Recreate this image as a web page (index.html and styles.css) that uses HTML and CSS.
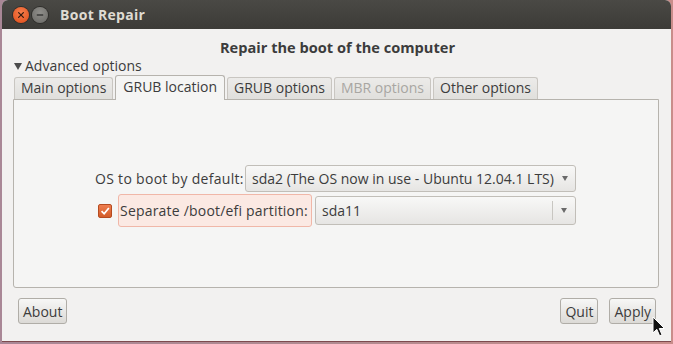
FILE: index.html
```html
<!DOCTYPE html>
<html>
<head>
<meta charset="utf-8">
<link rel="stylesheet" href="styles.css">
</head>
<body>
<div class="desk">
  <div class="window">
    <div class="titlebar">
      <span class="wbtn close"><svg width="14" height="14" viewBox="0 0 14 14"><path d="M4.6 4.6L9.4 9.4M9.4 4.6L4.6 9.4" stroke="#3a1d10" stroke-width="1.3" stroke-linecap="round"/></svg></span>
      <span class="wbtn mini"><svg width="14" height="14" viewBox="0 0 14 14"><path d="M3.8 7H10.2" stroke="#3a3a38" stroke-width="1.6"/></svg></span>
      <span class="wtitle">Boot Repair</span>
    </div>
    <div class="content">
      <div class="heading">Repair the boot of the computer</div>
      <div class="expander"><span class="arrow"></span>Advanced options</div>
      <div class="tabs">
        <div class="tab">Main options</div>
        <div class="tab active">GRUB location</div>
        <div class="tab">GRUB options</div>
        <div class="tab disabled">MBR options</div>
        <div class="tab">Other options</div>
      </div>
      <div class="panel">
        <div class="row row1">
          <span class="label">OS to boot by default:</span>
          <div class="combo combo1"><span class="ctext">sda2 (The OS now in use - Ubuntu 12.04.1 LTS)</span><span class="csep"></span><span class="carrow"></span></div>
        </div>
        <div class="row row2">
          <span class="check"><svg width="14" height="14" viewBox="0 0 14 14"><path d="M3 7.2L6 10.2L11.5 3.5" fill="none" stroke="#fff" stroke-width="2"/></svg></span>
          <span class="hlabel">Separate /boot/efi partition:</span>
          <div class="combo combo2"><span class="ctext">sda11</span><span class="csep"></span><span class="carrow"></span></div>
        </div>
      </div>
      <div class="buttons">
        <button class="btn">About</button>
        <div class="spacer"></div>
        <button class="btn">Quit</button>
        <button class="btn">Apply</button>
      </div>
    </div>
  </div>
  <svg class="cursor" width="14" height="22" viewBox="0 0 14 22"><path d="M1 1V17L4.8 13.3L7.6 19.8L10 18.8L7.3 12.5H12.5Z" fill="#111" stroke="#fff" stroke-width="1"/></svg>
</div>
</body>
</html>
```
FILE: styles.css
```css
html, body {
  margin: 0;
  padding: 0;
}
body {
  width: 673px;
  height: 344px;
  overflow: hidden;
  font-family: "Open Sans", "DejaVu Sans", sans-serif;
  font-size: 14px;
  color: #3c3c3c;
}
.desk {
  position: relative;
  width: 673px;
  height: 344px;
  background: linear-gradient(90deg, #a98796 0%, #b08a90 50%, #c98d8a 100%);
  display: flex;
  padding: 0 2px 0 2px;
  box-sizing: border-box;
}
.window {
  width: 669px;
  height: 341px;
  border-radius: 6px 6px 0 0;
  overflow: hidden;
  display: flex;
  flex-direction: column;
  background: #f2f1f0;
  box-shadow: 0 1px 0 #7e4a4e;
}
.titlebar {
  height: 29px;
  flex: none;
  background: linear-gradient(#4a4945, #3c3b37);
  display: flex;
  align-items: center;
  padding-left: 11px;
  gap: 3px;
}
.wbtn {
  width: 16px;
  height: 16px;
  border-radius: 50%;
  display: flex;
  align-items: center;
  justify-content: center;
}
.close {
  background: radial-gradient(circle at 50% 35%, #f77f4d, #df4b17);
  box-shadow: 0 0 0 1px #2f2e2b;
}
.mini {
  background: radial-gradient(circle at 50% 35%, #8f8e8a, #6a6965);
  box-shadow: 0 0 0 1px #2f2e2b;
}
.wtitle {
  margin-left: 9px;
  color: #dfdbd2;
  font-weight: bold;
  font-size: 14px;
  letter-spacing: 0.3px;
}
.content {
  flex: 1;
  display: flex;
  flex-direction: column;
  padding: 0 11px 0 11px;
}
.heading {
  text-align: center;
  font-weight: bold;
  font-size: 14.6px;
  margin-top: 9px;
  height: 19px;
  line-height: 19px;
  padding-left: 2px;
}
.expander {
  display: flex;
  align-items: center;
  height: 18px;
  line-height: 18px;
  font-size: 14px;
}
.arrow {
  width: 0;
  height: 0;
  border-left: 4px solid transparent;
  border-right: 4px solid transparent;
  border-top: 7px solid #4c4c4c;
  margin-right: 3px;
  margin-left: 1px;
}
.tabs {
  display: flex;
  align-items: flex-end;
  height: 24px;
  padding-left: 1px;
  gap: 2px;
  position: relative;
  z-index: 1;
}
.tab {
  height: 21px;
  line-height: 20px;
  padding: 0 6px;
  border: 1px solid #c9c6c1;
  border-bottom: none;
  border-radius: 3px 3px 0 0;
  background: linear-gradient(#ecebe9, #e0dfdc);
  font-size: 14px;
  color: #3c3c3c;
}
.tab.active {
  height: 24px;
  line-height: 22px;
  background: #f5f5f4;
  border-color: #b6b3ad;
  margin-bottom: -1px;
  padding: 0 7px;
}
.tab.disabled {
  color: #a8a6a2;
}
.panel {
  height: 189px;
  border: 1px solid #b6b3ad;
  border-radius: 0 0 3px 3px;
  background: #f5f5f4;
  display: flex;
  flex-direction: column;
  padding-top: 64px;
  box-sizing: border-box;
  margin-right: 1px;
}
.row {
  display: flex;
  align-items: center;
}
.row1 {
  padding-left: 81px;
  height: 28px;
}
.label {
  flex: none;
  font-size: 14px;
  width: 147px;
  text-align: right;
  white-space: nowrap;
  letter-spacing: 0.3px;
  margin-right: 3px;
}
.combo {
  flex: none;
  height: 27px;
  box-sizing: border-box;
  border: 1px solid #c1beb8;
  border-radius: 3px;
  background: linear-gradient(#f8f8f7, #e6e5e3);
  display: flex;
  align-items: center;
  font-size: 14px;
}
.combo1 {
  width: 331px;
}
.combo2 {
  width: 261px;
  height: 29px;
}
.ctext {
  flex: 1;
  padding-left: 6px;
  white-space: nowrap;
}
.csep {
  width: 1px;
  height: 19px;
  background: #c8c6c1;
}
.carrow {
  width: 0;
  height: 0;
  border-left: 3.5px solid transparent;
  border-right: 3.5px solid transparent;
  border-top: 5px solid #6a6a6a;
  margin: 0 8px 0 8px;
}
.row2 {
  margin-top: 2px;
  padding-left: 84px;
  height: 33px;
}
.check {
  flex: none;
  width: 14px;
  height: 14px;
  box-sizing: border-box;
  border-radius: 2px;
  background: linear-gradient(#ee7d4f, #d35c28);
  border: 1px solid #b54b20;
  display: flex;
  align-items: center;
  justify-content: center;
  margin-right: 6px;
}
.hlabel {
  flex: none;
  width: 194px;
  height: 33px;
  line-height: 31px;
  box-sizing: border-box;
  border: 1px solid #f0b7a8;
  border-radius: 3px;
  background: #fbe9e3;
  padding: 0 0 0 1px;
  font-size: 14px;
  letter-spacing: 0.2px;
  white-space: nowrap;
  margin-right: 3px;
}
.buttons {
  display: flex;
  align-items: center;
  margin-top: 10px;
  padding: 0 4px 0 5px;
  gap: 11px;
}
.spacer {
  flex: 1;
}
.btn {
  height: 26px;
  padding: 0 4px;
  border: 1px solid #b0ada7;
  border-radius: 3px;
  background: linear-gradient(#f7f7f6, #dcdad6);
  font-family: inherit;
  font-size: 14px;
  color: #3c3c3c;
}
.cursor {
  position: absolute;
  left: 652px;
  top: 316px;
}
```
